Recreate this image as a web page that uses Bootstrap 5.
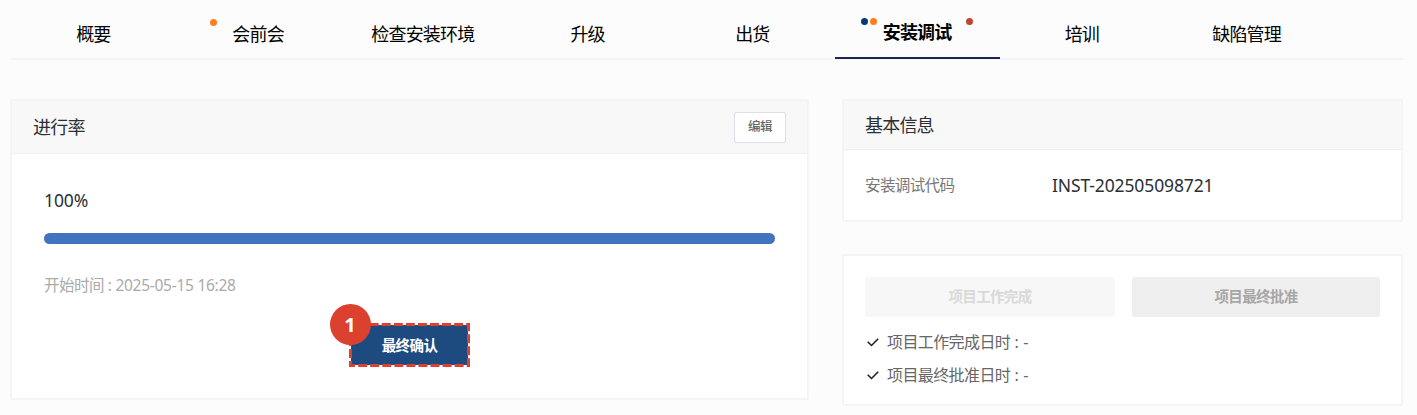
<!DOCTYPE html>
<html lang="zh-CN">
<head>
<meta charset="utf-8">
<meta name="viewport" content="width=device-width, initial-scale=1">
<title>安装调试</title>
<link href="https://cdn.jsdelivr.net/npm/bootstrap@5.3.0/dist/css/bootstrap.min.css" rel="stylesheet">
<style>
  body { background: #fcfcfc; color: #2b2f33; font-family: "Noto Sans", "Noto Sans CJK SC", sans-serif; font-size: 18px; letter-spacing: -.8px; line-height: 24px; padding: 0 14px 0 11px; overflow: hidden; }
  .stage-tabs { height: 60px; border-bottom: 2px solid #f4f4f4; margin-bottom: 39px; }
  .stage-tabs .nav-link { width: 164.75px; height: 59px; padding: 22px 0 0; color: #000; text-align: center; position: relative; }
  .stage-tabs .nav-link.active { font-weight: 700; padding-top: 20px; border-bottom: 2px solid #1c2359; }
  .dots { position: absolute; top: 18px; display: flex; gap: 2px; }
  .dots i { width: 7px; height: 7px; border-radius: 50%; }
  .d-orange { background: #ff7f20; } .d-navy { background: #073b70; } .d-red { background: #c0452f; }
  .left-pane { width: 799px; margin-left: -1px; } .right-pane { width: 561px; gap: 32px; }
  .panel { --bs-card-border-color: #f4f4f4; --bs-card-border-width: 2px; --bs-card-border-radius: 2px; --bs-card-inner-border-radius: 0; --bs-card-cap-bg: #f8f8f8; --bs-card-color: #2b2f33; }
  .panel > .card-header { padding: 0 21px; border-bottom: 1px solid #f0f0f0; }
  .progress-panel { height: 301px; } .progress-panel > .card-header { height: 53px; }
  .progress-panel > .card-body { padding: 34px 32px 0; }
  .info-panel { height: 123px; } .info-panel > .card-header { height: 49px; }
  .info-panel > .card-body { padding: 0 21px; }
  .edit-btn { width: 52px; height: 31px; padding: 0; border: 1px solid #dcdfe6; border-radius: 2px; background: #fff; color: #666; font-size: 12.5px; letter-spacing: -.6px; font-weight: 500; }
  .progress { height: 11px; border-radius: 6px; margin-top: 21px; --bs-progress-bar-bg: #4273bf; }
  .latin { font-size: 17.5px; letter-spacing: -.13px; }
  .start-time { font-size: 15.5px; letter-spacing: -.5px; color: #aaa; margin-top: 29px; }
  .start-time .latin-time { letter-spacing: -.27px; }
  .confirm-wrap { width: 121px; height: 44px; padding: 2px; margin: 26px auto 0; position: relative; }
  .confirm-btn { width: 117px; height: 40px; padding: 1px 0 0; border: 0; border-radius: 0; background: #1d4b80 !important; color: #fff; font-size: 14.5px; letter-spacing: -.6px; font-weight: 700; }
  .outline { position: absolute; inset: 0; pointer-events: none; }
  .step-mark { position: absolute; left: -19px; top: -19px; width: 41px; height: 41px; border-radius: 50%; background: #dc402f; color: #fff; font-size: 20px; font-weight: 700; letter-spacing: 0; padding-right: 1px; }
  .code-label { width: 187px; font-size: 15.6px; letter-spacing: -.7px; color: #777; }
  .approve-panel { height: 152px; } .approve-panel > .card-body { padding: 21px 21px 0; }
  .state-btn { height: 40px; padding: 0; border: 0; border-radius: 3px; font-size: 14.5px; letter-spacing: -.65px; font-weight: 700; opacity: 1 !important; }
  .work-btn { width: 250px; background: #f7f7f7 !important; color: #d9d9d9 !important; }
  .final-btn { width: 248px; background: #efefef !important; color: #a6a6a6 !important; }
  .dates { font-size: 16px; letter-spacing: -.6px; color: #666; margin-top: 13px; gap: 9px; }
  .colon { letter-spacing: .15px; white-space: pre; }
</style>
</head>
<body>
<ul class="nav stage-tabs flex-nowrap">
  <li class="nav-item"><a class="nav-link">概要</a></li>
  <li class="nav-item"><a class="nav-link"><span class="dots" style="left:34px;top:19px"><i class="d-orange"></i></span>会前会</a></li>
  <li class="nav-item"><a class="nav-link">检查安装环境</a></li>
  <li class="nav-item"><a class="nav-link">升级</a></li>
  <li class="nav-item"><a class="nav-link">出货</a></li>
  <li class="nav-item"><a class="nav-link active"><span class="dots" style="left:26px"><i class="d-navy"></i><i class="d-orange"></i></span>安装调试<span class="dots" style="left:131px"><i class="d-red"></i></span></a></li>
  <li class="nav-item"><a class="nav-link">培训</a></li>
  <li class="nav-item"><a class="nav-link">缺陷管理</a></li>
</ul>
<main class="d-flex justify-content-between align-items-start">
  <section class="left-pane">
    <div class="card panel progress-panel">
      <div class="card-header d-flex align-items-center justify-content-between"><span>进行率</span><button class="btn edit-btn">编辑</button></div>
      <div class="card-body">
        <div class="latin">100%</div>
        <div class="progress"><div class="progress-bar" style="width:100%"></div></div>
        <div class="start-time">开始时间<span class="latin-time"> : 2025-05-15 16:28</span></div>
        <div class="confirm-wrap">
          <button class="btn confirm-btn d-block">最终确认</button>
          <svg class="outline" width="121" height="44"><rect x="1.5" y="1.5" width="118" height="41" fill="none" stroke="#dc402f" stroke-width="3" stroke-dasharray="9 3.06" stroke-dashoffset="-7.1"/></svg>
          <span class="step-mark d-flex align-items-center justify-content-center">1</span>
        </div>
      </div>
    </div>
  </section>
  <aside class="right-pane d-flex flex-column">
    <div class="card panel info-panel">
      <div class="card-header d-flex align-items-center">基本信息</div>
      <div class="card-body d-flex align-items-center"><span class="code-label">安装调试代码</span><span class="latin">INST-202505098721</span></div>
    </div>
    <div class="card panel approve-panel">
      <div class="card-body">
        <div class="d-flex justify-content-between">
          <button class="btn state-btn work-btn" disabled>项目工作完成</button>
          <button class="btn state-btn final-btn" disabled>项目最终批准</button>
        </div>
        <div class="dates d-flex flex-column">
          <div class="d-flex align-items-center"><svg width="22" height="16" viewBox="0 0 22 16" fill="none" stroke="#222" stroke-width="1.6"><path d="M2.7 7.8 6.5 11.5 13.2 4.8"/></svg>项目工作完成日时<span class="colon"> : -</span></div>
          <div class="d-flex align-items-center"><svg width="22" height="16" viewBox="0 0 22 16" fill="none" stroke="#222" stroke-width="1.6"><path d="M2.7 7.8 6.5 11.5 13.2 4.8"/></svg>项目最终批准日时<span class="colon"> : -</span></div>
        </div>
      </div>
    </div>
  </aside>
</main>
<script src="https://cdn.jsdelivr.net/npm/bootstrap@5.3.0/dist/js/bootstrap.bundle.min.js"></script>
</body>
</html>
